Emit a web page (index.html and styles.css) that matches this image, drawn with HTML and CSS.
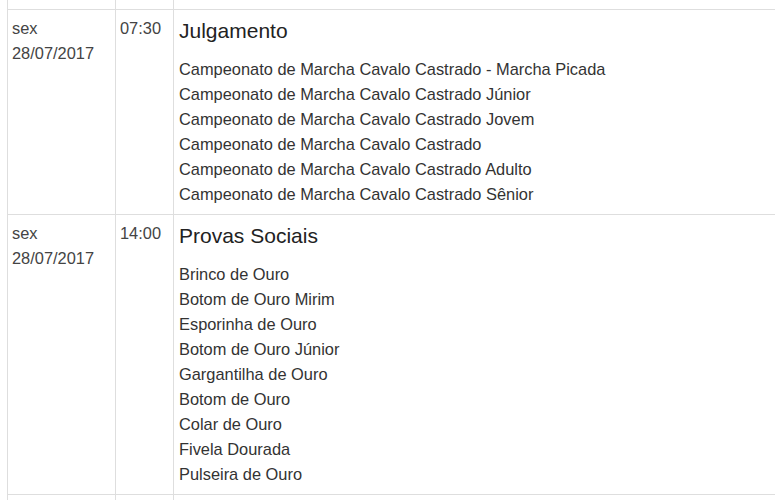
FILE: index.html
```html
<!DOCTYPE html>
<html lang="pt-BR">
<head>
<meta charset="utf-8">
<title>Programação</title>
<link rel="stylesheet" href="styles.css">
</head>
<body>
<div class="page">
<table class="schedule">
  <colgroup>
    <col class="c-date">
    <col class="c-time">
    <col class="c-event">
  </colgroup>
  <tr class="cut-top"><td></td><td></td><td></td></tr>
  <tr>
    <td class="date">sex<br>28/07/2017</td>
    <td class="time">07:30</td>
    <td class="event">
      <h4 class="title">Julgamento</h4>
      <ul class="items">
        <li>Campeonato de Marcha Cavalo Castrado - Marcha Picada</li>
        <li>Campeonato de Marcha Cavalo Castrado Júnior</li>
        <li>Campeonato de Marcha Cavalo Castrado Jovem</li>
        <li>Campeonato de Marcha Cavalo Castrado</li>
        <li>Campeonato de Marcha Cavalo Castrado Adulto</li>
        <li>Campeonato de Marcha Cavalo Castrado Sênior</li>
      </ul>
    </td>
  </tr>
  <tr>
    <td class="date">sex<br>28/07/2017</td>
    <td class="time">14:00</td>
    <td class="event">
      <h4 class="title">Provas Sociais</h4>
      <ul class="items">
        <li>Brinco de Ouro</li>
        <li>Botom de Ouro Mirim</li>
        <li>Esporinha de Ouro</li>
        <li>Botom de Ouro Júnior</li>
        <li>Gargantilha de Ouro</li>
        <li>Botom de Ouro</li>
        <li>Colar de Ouro</li>
        <li>Fivela Dourada</li>
        <li>Pulseira de Ouro</li>
      </ul>
    </td>
  </tr>
  <tr class="cut-bottom"><td></td><td></td><td></td></tr>
</table>
</div>
</body>
</html>
```
FILE: styles.css
```css
html, body {
  margin: 0;
  padding: 0;
  background: #fff;
  overflow: hidden;
}

.page {
  padding-left: 7px;
  font-family: "Liberation Sans", Arial, sans-serif;
  color: #333;
}

.schedule {
  border-collapse: collapse;
  table-layout: fixed;
  width: 768px;
}

.c-date { width: 108px; }
.c-time { width: 58px; }

.schedule td {
  border: 1px solid #dedede;
  padding: 6px 4px 7px;
  vertical-align: top;
  font-size: 16.4px;
  line-height: 25px;
}

.schedule td:last-child {
  border-right: none;
}

.cut-top td {
  border-top: none;
  height: 9px;
  padding: 0;
}

.cut-bottom td {
  border-bottom: none;
  height: 20px;
  padding: 0;
}

.date, .time {
  color: #444;
}

.schedule td.event {
  padding-left: 5px;
}

.title {
  margin: 4px 0 15px;
  font-size: 21px;
  line-height: 22px;
  font-weight: normal;
  color: #222;
}

.items {
  list-style: none;
  margin: 0;
  padding: 0;
}
```
